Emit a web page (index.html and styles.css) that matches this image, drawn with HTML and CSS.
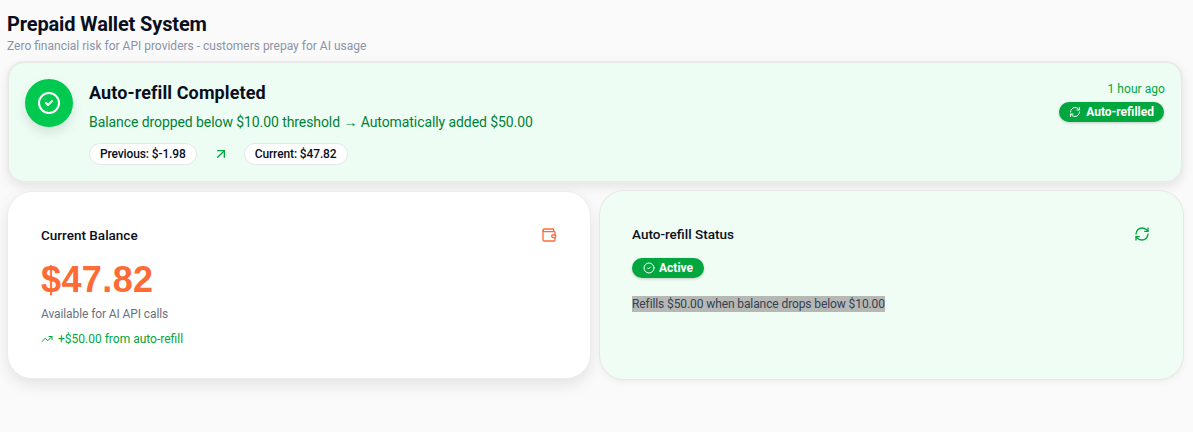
FILE: index.html
```html
<!DOCTYPE html>
<html lang="en">
<head>
<meta charset="utf-8">
<title>Prepaid Wallet System</title>
<link rel="stylesheet" href="styles.css">
</head>
<body>
<header class="head">
  <h1 class="title">Prepaid Wallet System</h1>
  <p class="subtitle">Zero financial risk for API providers - customers prepay for AI usage</p>
</header>
<section class="banner">
  <div class="round"><svg class="round-icon" viewBox="0 0 24 24"><circle cx="12" cy="12" r="10"/><path d="m9 12 2 2 4-4"/></svg></div>
  <div class="banner-body">
    <h2 class="banner-title">Auto-refill Completed</h2>
    <p class="banner-text">Balance dropped below $10.00 threshold → Automatically added $50.00</p>
    <div class="chips">
      <span class="chip">Previous: $-1.98</span>
      <svg class="chip-arrow" viewBox="0 0 24 24"><path d="M7 7h10v10"/><path d="M7 17 17 7"/></svg>
      <span class="chip">Current: $47.82</span>
    </div>
  </div>
  <div class="banner-side">
    <span class="time">1 hour ago</span>
    <span class="pill pill-shift"><svg class="pill-icon" viewBox="0 0 24 24"><path d="M3 12a9 9 0 0 1 9-9 9.75 9.75 0 0 1 6.74 2.74L21 8"/><path d="M21 3v5h-5"/><path d="M21 12a9 9 0 0 1-9 9 9.75 9.75 0 0 1-6.74-2.74L3 16"/><path d="M8 16H3v5"/></svg>Auto-refilled</span>
  </div>
</section>
<div class="cards">
  <section class="card card-white">
    <div class="card-head">
      <h3 class="card-title">Current Balance</h3>
      <svg class="wallet" viewBox="0 0 24 24"><path d="M19 7V4a1 1 0 0 0-1-1H5a2 2 0 0 0 0 4h15a1 1 0 0 1 1 1v4h-3a2 2 0 0 0 0 4h3a1 1 0 0 0 1-1v-2a1 1 0 0 0-1-1"/><path d="M3 5v14a2 2 0 0 0 2 2h15a1 1 0 0 0 1-1v-4"/></svg>
    </div>
    <div class="amount">$47.82</div>
    <p class="muted">Available for AI API calls</p>
    <p class="trend"><svg class="trend-icon" viewBox="0 0 24 24"><path d="M16 7h6v6"/><path d="m22 7-8.5 8.5-5-5L2 17"/></svg>+$50.00 from auto-refill</p>
  </section>
  <section class="card card-green">
    <div class="card-head">
      <h3 class="card-title">Auto-refill Status</h3>
      <svg class="sync" viewBox="0 0 24 24"><path d="M3 12a9 9 0 0 1 9-9 9.75 9.75 0 0 1 6.74 2.74L21 8"/><path d="M21 3v5h-5"/><path d="M21 12a9 9 0 0 1-9 9 9.75 9.75 0 0 1-6.74-2.74L3 16"/><path d="M8 16H3v5"/></svg>
    </div>
    <span class="pill pill-active"><svg class="pill-icon" viewBox="0 0 24 24"><circle cx="12" cy="12" r="10"/><path d="m9 12 2 2 4-4"/></svg>Active</span>
    <p class="note"><span class="selected">Refills $50.00 when balance drops below $10.00</span></p>
  </section>
</div>
</body>
</html>
```
FILE: styles.css
```css
* { box-sizing: border-box; }
html, body { margin: 0; height: 100%; }
body {
  background: #fafafa;
  color: #0a0f1e;
  font-family: Roboto, sans-serif;
  padding: 12px 10px 0 8px;
  overflow: hidden;
}
h1, h2, h3, p { margin: 0; }
.head { margin-left: -1px; height: 50px; }
.title { font-size: 20px; line-height: 24px; font-weight: 700; letter-spacing: -0.15px; }
.subtitle { font-size: 12px; line-height: 16px; margin-top: 2px; color: #8a93a8; }
.banner {
  display: flex;
  height: 120px;
  margin-right: 1px;
  padding: 16px;
  background: #edfdf4;
  border: 1px solid #e8e8e8;
  border-radius: 16px;
  box-shadow: 0 0 0 1px #ececec, 0 4px 12px rgba(0, 0, 0, 0.1);
}
.round {
  flex: none;
  width: 48px;
  height: 48px;
  border-radius: 50%;
  background: #00c950;
  display: flex;
  align-items: center;
  justify-content: center;
  box-shadow: 0 6px 12px rgba(0, 0, 0, 0.1);
}
.round-icon { width: 24px; height: 24px; fill: none; stroke: #fff; stroke-width: 2; stroke-linecap: round; stroke-linejoin: round; }
.banner-body { flex: 1; margin-left: 16px; }
.banner-title { font-size: 18px; line-height: 28px; font-weight: 700; letter-spacing: 0.1px; }
.banner-text { font-size: 14px; line-height: 20px; margin-top: 5px; color: #008236; letter-spacing: -0.08px; }
.chips { display: flex; align-items: center; margin-top: 11px; }
.chip {
  height: 22px;
  padding: 0 10px;
  border: 1px solid #e5e7eb;
  border-radius: 11px;
  background: #fff;
  font-size: 12px;
  font-weight: 500;
  line-height: 20px;
  letter-spacing: -0.12px;
}
.chip-arrow { width: 16px; height: 16px; margin: 0 15px 0 16px; fill: none; stroke: #00a63e; stroke-width: 2; stroke-linecap: round; stroke-linejoin: round; }
.banner-side { display: flex; flex-direction: column; align-items: flex-end; }
.time { font-size: 12px; line-height: 16px; margin-top: 2px; color: #00a63e; letter-spacing: 0.05px; }
.pill {
  display: inline-flex;
  align-items: center;
  gap: 4px;
  height: 20px;
  padding: 0 10px;
  border-radius: 10px;
  background: #00a63e;
  color: #fff;
  font-size: 12px;
  font-weight: 700;
  box-shadow: 0 1px 3px rgba(0, 0, 0, 0.2);
}
.pill-shift { margin-top: 5px; margin-right: 1px; gap: 5px; }
.pill-active { padding: 0 11px; }
.pill-icon { width: 12px; height: 12px; fill: none; stroke: #fff; stroke-width: 2; stroke-linecap: round; stroke-linejoin: round; }
.cards { display: grid; grid-template-columns: 582px 583px; gap: 10px; margin-top: 10px; }
.card { border-radius: 24px; height: 186px; }
.card-white {
  background: #fff;
  padding: 33px 33px 0 33px;
  box-shadow: 0 0 0 1px #ececec, 0 6px 16px rgba(0, 0, 0, 0.1);
}
.card-green {
  background: #f0fdf4;
  height: 188px;
  margin-top: -1px;
  padding: 33px 33px 0 32px;
  box-shadow: 0 0 0 1px #e6e8e6, 0 3px 6px rgba(0, 0, 0, 0.06);
}
.card-head { display: flex; justify-content: space-between; align-items: center; height: 20px; margin-bottom: 15px; }
.card-green .card-head { margin-bottom: 14px; }
.card-title { font-size: 13.5px; line-height: 20px; font-weight: 500; }
.wallet { width: 16px; height: 16px; fill: none; stroke: #ff6b35; stroke-width: 2; stroke-linecap: round; stroke-linejoin: round; }
.sync { width: 16px; height: 16px; fill: none; stroke: #00a63e; stroke-width: 2; stroke-linecap: round; stroke-linejoin: round; }
.amount { font-family: "Liberation Sans", sans-serif; font-size: 36px; line-height: 40px; font-weight: 700; color: #ff6b35; letter-spacing: 0.4px; }
.muted { font-size: 12px; line-height: 16px; margin-top: 6px; color: #6a7282; letter-spacing: -0.1px; }
.trend { display: flex; align-items: center; gap: 5px; font-size: 12px; line-height: 16px; margin-top: 9px; color: #00a63e; }
.trend-icon { width: 12px; height: 12px; fill: none; stroke: #00a63e; stroke-width: 2; stroke-linecap: round; stroke-linejoin: round; }
.note { font-size: 12px; line-height: 16px; margin-top: 18px; color: #364153; letter-spacing: -0.1px; }
.selected { background: #b5b8b4; padding: 1px 0; }
```
